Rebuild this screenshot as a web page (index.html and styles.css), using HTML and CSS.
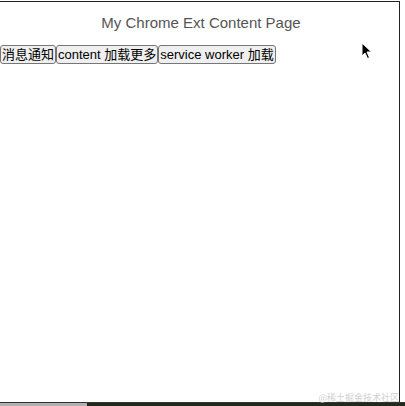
FILE: index.html
```html
<!DOCTYPE html>
<html>
<head>
<meta charset="utf-8">
<link rel="stylesheet" href="styles.css">
</head>
<body>
<div class="frame">
  <div class="title">My Chrome Ext Content Page</div>
  <div class="actions">
    <button class="btn">消息通知</button><button class="btn">content 加载更多</button><button class="btn">service worker 加载</button>
  </div>
  <svg class="cursor" width="12" height="18" viewBox="0 0 12 18">
    <path d="M1 1 L1 14 L4 11 L6.5 16.5 L8.5 15.5 L6 10 L10.5 10 Z" fill="#000" stroke="#fff" stroke-width="1"/>
  </svg>
  <div class="watermark">@稀土掘金技术社区</div>
</div>
<div class="dock">
  <div class="dock-left"></div>
  <div class="dock-right"></div>
</div>
</body>
</html>
```

FILE: styles.css
```css
html, body {
  margin: 0;
  padding: 0;
  background: #fff;
}
body {
  width: 405px;
  height: 406px;
  overflow: hidden;
}
.frame {
  position: relative;
  width: 399px;
  height: 400px;
  border-top: 1px solid #222;
  border-right: 1px solid #222;
  box-sizing: content-box;
  margin-top: 1px;
  display: flex;
  flex-direction: column;
}
.title {
  font-family: "Liberation Sans", Arial, sans-serif;
  font-size: 15px;
  color: #555;
  text-align: center;
  line-height: 18px;
  padding-top: 12px;
  margin-left: 3px;
}
.actions {
  display: flex;
  margin-top: 13px;
}
.btn {
  font-family: "Liberation Sans", Arial, "Noto Sans CJK SC", sans-serif;
  font-size: 13px;
  line-height: 15px;
  color: #000;
  background: #efefef;
  border: 1px solid #767676;
  border-radius: 3px;
  padding: 1px 1px;
  margin: 0;
}
.cursor {
  position: absolute;
  left: 361px;
  top: 40px;
}
.watermark {
  position: absolute;
  right: 0;
  bottom: -2px;
  font-family: "Noto Sans CJK SC", sans-serif;
  font-size: 9px;
  line-height: 12px;
  color: #d0d0d0;
}
.dock {
  display: flex;
  height: 4px;
  border-top: 1px solid #333;
}
.dock-left {
  width: 87px;
  background: #b0b0b0;
}
.dock-right {
  flex: 1;
  background: #1f2a1c;
}
```
